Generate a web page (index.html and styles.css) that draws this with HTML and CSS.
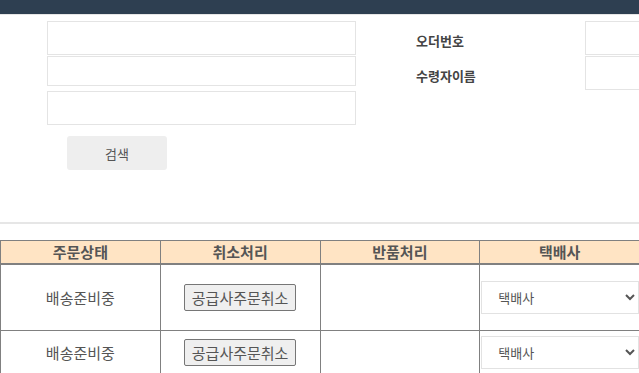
FILE: index.html
```html
<!DOCTYPE html>
<html lang="ko">
<head>
    <meta charset="UTF-8">
    <meta name="viewport" content="width=device-width, initial-scale=1.0">
    <title>주문관리</title>
    <link rel="stylesheet" href="styles.css">
</head>
<body>
    <div class="topbar"></div>

    <div class="search">
        <div class="search-grid">
            <input type="text" class="field left">
            <div class="label">오더번호</div>
            <input type="text" class="field right">

            <input type="text" class="field left short">
            <div class="label">수령자이름</div>
            <input type="text" class="field right">

            <input type="text" class="field left">
        </div>
        <button class="btn-search">검색</button>
    </div>

    <div class="divider"></div>

    <table class="orders">
        <thead>
            <tr>
                <th>주문상태</th>
                <th>취소처리</th>
                <th>반품처리</th>
                <th>택배사</th>
            </tr>
        </thead>
        <tbody>
            <tr class="row-tall">
                <td>배송준비중</td>
                <td><button class="btn-cancel">공급사주문취소</button></td>
                <td></td>
                <td class="courier">
                    <select class="courier-select">
                        <option>택배사</option>
                    </select>
                </td>
            </tr>
            <tr class="row-short">
                <td>배송준비중</td>
                <td><button class="btn-cancel">공급사주문취소</button></td>
                <td></td>
                <td class="courier">
                    <select class="courier-select">
                        <option>택배사</option>
                    </select>
                </td>
            </tr>
        </tbody>
    </table>
</body>
</html>
```

FILE: styles.css
```css
* {
    margin: 0;
    padding: 0;
    box-sizing: border-box;
    font-family: 'Noto Sans CJK KR', 'Noto Sans', sans-serif;
}

body {
    background: white;
    overflow: hidden;
    color: #555;
}

.topbar {
    height: 15px;
    background: #2e3f51;
    border-bottom: 1px solid #e6e6e6;
}

.search {
    padding: 6px 0 0 47px;
}

.search-grid {
    display: grid;
    grid-template-columns: 309px 60px 169px 100px;
    grid-auto-rows: 34px;
    row-gap: 1px;
}

.field {
    height: 34px;
    border: 1px solid #e4e4e4;
    background: white;
    outline: none;
}

.field.short {
    height: 30px;
}

.field.left {
    grid-column: 1;
}

.label {
    grid-column: 3;
    display: flex;
    align-items: center;
    padding-top: 4px;
    font-size: 13px;
    font-weight: bold;
    color: #444;
    line-height: 1;
}

.field.right {
    grid-column: 4;
}

.btn-search {
    display: block;
    margin: 11px 0 0 20px;
    width: 100px;
    height: 34px;
    border: none;
    border-radius: 3px;
    background: #eeeeee;
    color: #555;
    font-size: 13px;
}

.divider {
    margin-top: 52px;
    height: 2px;
    background: #e6e6e6;
}

.orders {
    margin-top: 16px;
    width: 640px;
    border-collapse: collapse;
    table-layout: fixed;
}

.orders th,
.orders td {
    border: 1px solid #808080;
    text-align: center;
    font-size: 15px;
    line-height: 1;
    padding: 0;
}

.orders th {
    background: #ffe4c4;
    height: 23px;
    font-weight: bold;
    color: #555;
    border-bottom: 2px solid #808080;
}

.row-tall td {
    height: 67px;
}

.row-short td {
    height: 44px;
}

.btn-cancel {
    padding: 0 7px;
    height: 27px;
    border: 1px solid #767676;
    border-radius: 2px;
    background: #efefef;
    color: #555;
    font-size: 15px;
}

.courier {
    padding: 0 0 0 1px !important;
}

.courier-select {
    width: 100%;
    height: 33px;
    border: 1px solid #e2e2e2;
    background: white;
    color: #555;
    font-size: 13px;
    padding: 0 12px;
    outline: none;
}
```
